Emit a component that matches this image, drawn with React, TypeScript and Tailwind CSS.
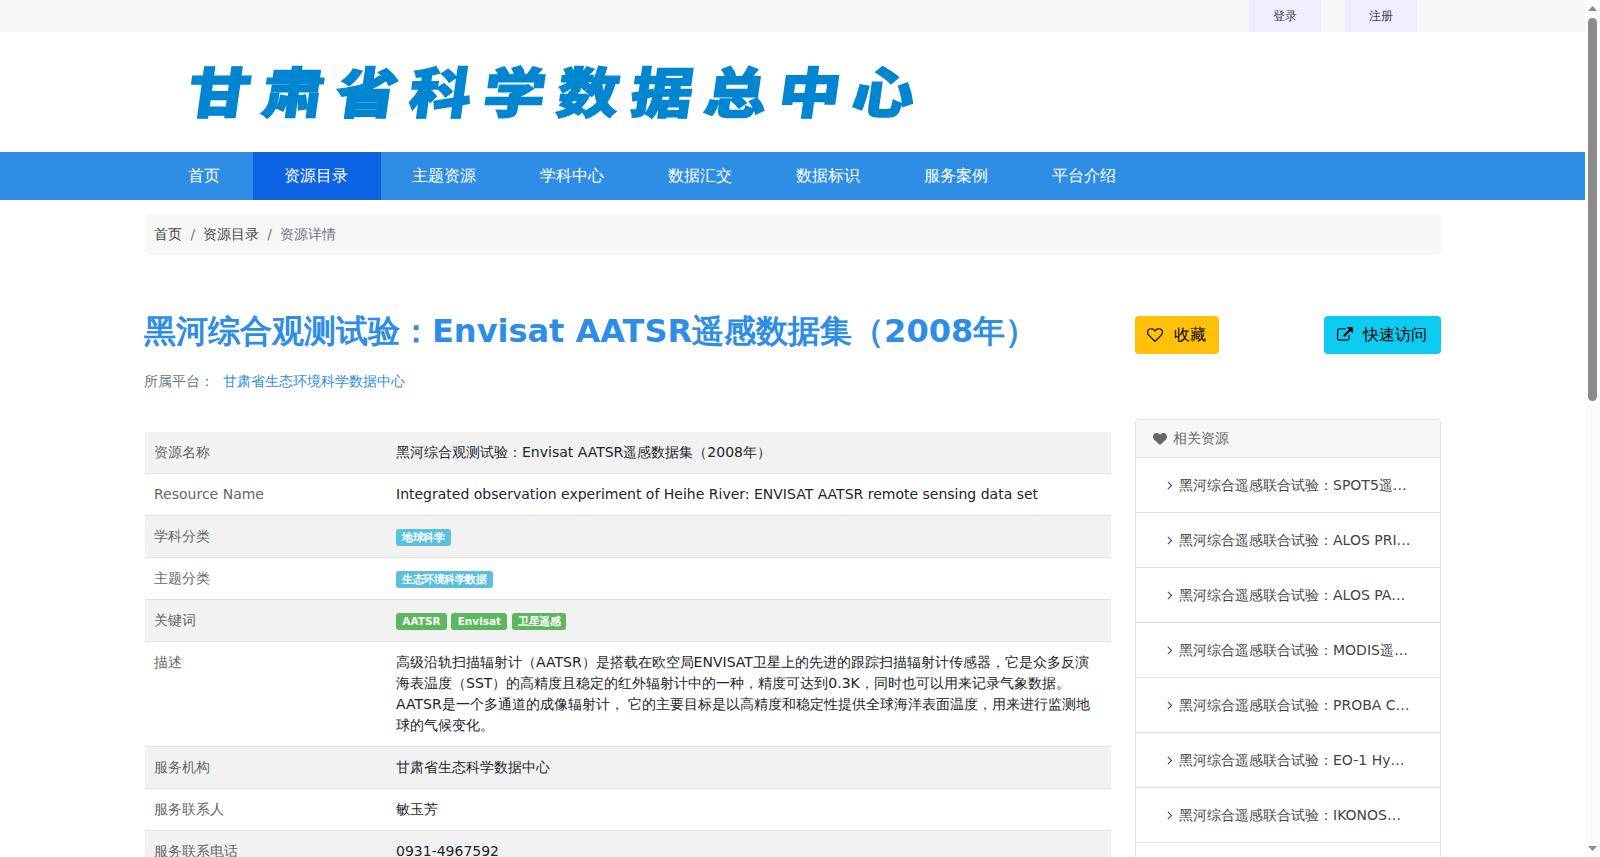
import React from "react";

const NAV = ["首页", "资源目录", "主题资源", "学科中心", "数据汇交", "数据标识", "服务案例", "平台介绍"];

const RELATED = ["SPOT5遥…", "ALOS PRI…", "ALOS PA…", "MODIS遥…", "PROBA C…", "EO-1 Hy…", "IKONOS…"];

const HEART =
  "M896 1664q-26 0-44-18l-624-602q-10-8-27.5-26t-55.5-65.5-68-97.5-53.5-121-23.5-138q0-220 127-344t351-124q62 0 126.5 21.5t120 58 95.5 68.5 76 68q36-36 76-68t95.5-68.5 120-58 126.5-21.5q224 0 351 124t127 344q0 221-229 450l-623 600q-18 18-44 18z";
const HEART_O =
  "M1664 596q0-81-21.5-143t-55-98.5-81.5-59.5-94-31-98-8-112 25.5-110.5 64-86.5 72-60 61.5q-18 22-49 22t-49-22q-24-28-60-61.5t-86.5-72-110.5-64-112-25.5-98 8-94 31-81.5 59.5-55 98.5-21.5 143q0 168 187 355l581 560 580-559q188-188 188-356zm128 0q0 221-229 450l-623 600q-18 18-44 18t-44-18l-624-602q-10-8-27.5-26t-55.5-65.5-68-97.5-53.5-121-23.5-138q0-220 127-344t351-124q62 0 126.5 21.5t120 58 95.5 68.5 76 68q36-36 76-68t95.5-68.5 120-58 126.5-21.5q224 0 351 124t127 344z";
const EXTERNAL =
  "M1408 928v320q0 119-84.5 203.5t-203.5 84.5h-832q-119 0-203.5-84.5t-84.5-203.5v-832q0-119 84.5-203.5t203.5-84.5h704q14 0 23 9t9 23v64q0 14-9 23t-23 9h-704q-66 0-113 47t-47 113v832q0 66 47 113t113 47h832q66 0 113-47t47-113v-320q0-14 9-23t23-9h64q14 0 23 9t9 23zm384-864v512q0 26-19 45t-45 19-45-19l-176-176-652 652q-10 10-23 10t-23-10l-114-114q-10-10-10-23t10-23l652-652-176-176q-19-19-19-45t19-45 45-19h512q26 0 45 19t19 45z";
const ANGLE =
  "M1171 960q0 13-10 23l-466 466q-10 10-23 10t-23-10l-50-50q-10-10-10-23t10-23l393-393-393-393q-10-10-10-23t10-23l50-50q10-10 23-10t23 10l466 466q10 10 10 23z";

function Icon({ d, className }: { d: string; className: string }) {
  return (
    <svg viewBox="0 0 1792 1792" fill="currentColor" className={className}>
      <path d={d} />
    </svg>
  );
}

function Tag({ children, green, cjk }: { children: React.ReactNode; green?: boolean; cjk?: boolean }) {
  return (
    <span
      className={
        "flex h-[17px] items-center rounded-[3px] px-[6.3px] text-[10.5px] leading-none font-bold text-white " +
        (green ? "bg-[#5cb85c] " : "bg-[#5bc0de] ") +
        (cjk ? "tracking-[-0.5px]" : "")
      }
    >
      {children}
    </span>
  );
}

function Row({ label, striped, children }: { label: string; striped?: boolean; children: React.ReactNode }) {
  return (
    <div className={"flex border-b border-[#dee2e6] text-[14px] leading-[21px] " + (striped ? "bg-[#f2f2f2]" : "bg-white")}>
      <div className="w-[241.5px] shrink-0 py-[10px] pr-[10px] pl-[9.5px] text-[#666]">{label}</div>
      <div className="min-w-0 flex-1 px-[10px] py-[10px] text-[#212529]">{children}</div>
    </div>
  );
}

export default function App() {
  return (
    <div className="flex h-[857px] w-full overflow-hidden bg-white font-['DejaVu_Sans',sans-serif] text-[#212529]">
      <div className="h-full min-w-0 flex-1 overflow-hidden">
        <div className="flex h-8 justify-end gap-6 bg-[#f7f7f7] pr-[168px] text-[12px] text-[#444]">
          <a className="flex h-8 w-[72px] items-center justify-center bg-[#efeeff] pr-px">登录</a>
          <a className="flex h-8 w-[72px] items-center justify-center bg-[#efeeff] pr-px">注册</a>
        </div>

        <header className="flex h-[120px] items-center pb-[7px] pl-[189px]">
          <h1 className="flex origin-center scale-y-[0.88] -skew-x-[7deg] gap-[11.8px] font-['Noto_Sans_CJK_SC',sans-serif] text-[62px] leading-none font-black text-[#0086d1] [-webkit-text-stroke:1.5px_#0086d1]">
            {Array.from("甘肃省科学数据总中心").map((c) => (
              <span key={c}>{c}</span>
            ))}
          </h1>
        </header>

        <nav className="flex h-12 bg-[#2e8de5] pl-[156.5px] text-[16px] text-white">
          {NAV.map((n, i) => (
            <a key={n} className={"flex h-12 items-center pr-[32.5px] pl-[31.5px] " + (i === 1 ? "bg-[#0c63e4]" : "")}>
              {n}
            </a>
          ))}
        </nav>

        <main className="mx-auto w-[1296px]">
          <div className="mt-[14px] flex h-[41px] items-center rounded bg-[#f7f7f7] px-[9.5px] text-[14px] leading-[21px] text-[#444]">
            <span>首页</span>
            <span className="pr-2 pl-[8.5px] text-[#6c757d]">/</span>
            <span>资源目录</span>
            <span className="px-2 text-[#6c757d]">/</span>
            <span className="text-[#6c757d]">资源详情</span>
          </div>

          <div className="flex gap-6">
            <section className="w-[966px] shrink-0">
              <h2 className="mt-[57px] -ml-[0.5px] text-[32px] leading-[38px] font-bold whitespace-nowrap text-[#2e8de5]">
                黑河综合观测试验：Envisat AATSR遥感数据集（2008年）
              </h2>
              <p className="mt-[21px] -ml-[0.5px] flex text-[14px] leading-[21px] text-[#6c757d]">
                所属平台：<span className="ml-[9px] text-[#2e8de5]">甘肃省生态环境科学数据中心</span>
              </p>
              <div className="mt-[40px]">
                <Row label="资源名称" striped>黑河综合观测试验：Envisat AATSR遥感数据集（2008年）</Row>
                <Row label="Resource Name">
                  Integrated observation experiment of Heihe River: ENVISAT AATSR remote sensing data set
                </Row>
                <Row label="学科分类" striped>
                  <div className="flex pt-[3px]"><Tag cjk>地球科学</Tag></div>
                </Row>
                <Row label="主题分类">
                  <div className="flex pt-[3px]"><Tag cjk>生态环境科学数据</Tag></div>
                </Row>
                <Row label="关键词" striped>
                  <div className="flex gap-[4.5px] pt-[3px]">
                    <Tag green>AATSR</Tag>
                    <Tag green>Envisat</Tag>
                    <Tag green cjk>卫星遥感</Tag>
                  </div>
                </Row>
                <Row label="描述">
                  高级沿轨扫描辐射计（AATSR）是搭载在欧空局ENVISAT卫星上的先进的跟踪扫描辐射计传感器，它是众多反演海表温度（SST）的高精度且稳定的红外辐射计中的一种，精度可达到0.3K，同时也可以用来记录气象数据。AATSR是一个多通道的成像辐射计， 它的主要目标是以高精度和稳定性提供全球海洋表面温度，用来进行监测地球的气候变化。
                </Row>
                <Row label="服务机构" striped>甘肃省生态科学数据中心</Row>
                <Row label="服务联系人">敏玉芳</Row>
                <Row label="服务联系电话" striped>0931-4967592</Row>
              </div>
            </section>

            <aside className="flex-1">
              <div className="mt-[61px] flex justify-between text-[16px] leading-6 text-black">
                <button className="flex h-[38px] items-center rounded bg-[#ffc107] pr-[13px] pl-[12.5px]">
                  <Icon d={HEART_O} className="mr-[10.5px] size-4" />
                  收藏
                </button>
                <button className="flex h-[38px] items-center rounded bg-[#0dcaf0] px-[13.5px]">
                  <Icon d={EXTERNAL} className="mr-[10px] size-4" />
                  快速访问
                </button>
              </div>
              <div className="mt-[65px] overflow-hidden rounded border border-[#dfdfdf] text-[14px] leading-[21px]">
                <div className="flex h-[38px] items-center border-b border-[#dfdfdf] bg-[#f7f7f7] pl-[17.5px] text-[#666]">
                  <Icon d={HEART} className="mr-[6px] size-[14px]" />
                  相关资源
                </div>
                {RELATED.map((r) => (
                  <a key={r} className="flex h-[55px] items-center border-b border-[#dfdfdf] pl-[27.5px] text-[#444]">
                    <Icon d={ANGLE} className="mr-[2px] size-[14px]" />
                    黑河综合遥感联合试验：{r}
                  </a>
                ))}
                <div className="h-[55px]" />
              </div>
            </aside>
          </div>
        </main>
      </div>

      <div className="flex h-full w-[15px] shrink-0 flex-col items-center bg-[#fcfcfc] text-[#8b8b8b]">
        <svg viewBox="0 0 15 18" className="h-[18px] w-[15px]" fill="currentColor">
          <path d="M3 11 7.5 6 12 11z" />
        </svg>
        <div className="h-[383px] w-[9px] rounded-full bg-[#8b8b8b]" />
        <div className="flex-1" />
        <svg viewBox="0 0 15 18" className="h-[18px] w-[15px]" fill="currentColor">
          <path d="M3 7 7.5 12 12 7z" />
        </svg>
      </div>
    </div>
  );
}
